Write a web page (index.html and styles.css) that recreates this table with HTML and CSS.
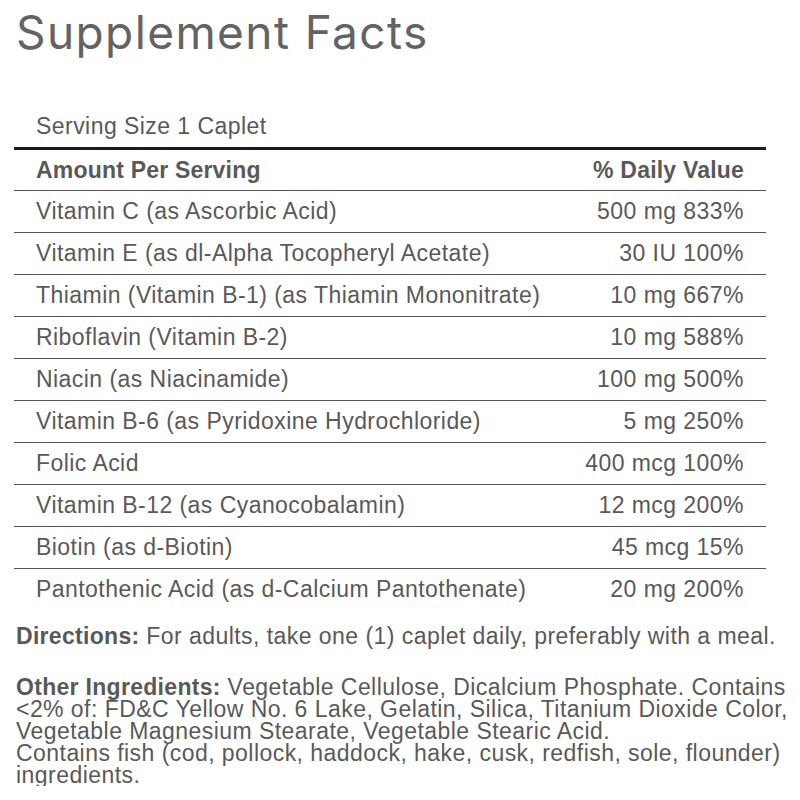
FILE: index.html
```html
<!DOCTYPE html>
<html lang="en">
<head>
<meta charset="utf-8">
<title>Supplement Facts</title>
<link rel="stylesheet" href="styles.css">
</head>
<body>
<div class="page">
  <h1 class="title">Supplement Facts</h1>
  <table class="facts">
    <tbody>
      <tr class="serving"><td colspan="2">Serving Size 1 Caplet</td></tr>
      <tr class="head"><th class="name">Amount Per Serving</th><th class="val">% Daily Value</th></tr>
      <tr><td class="name">Vitamin C (as Ascorbic Acid)</td><td class="val">500 mg 833%</td></tr>
      <tr><td class="name">Vitamin E (as dl-Alpha Tocopheryl Acetate)</td><td class="val">30 IU 100%</td></tr>
      <tr><td class="name">Thiamin (Vitamin B-1) (as Thiamin Mononitrate)</td><td class="val">10 mg 667%</td></tr>
      <tr><td class="name">Riboflavin (Vitamin B-2)</td><td class="val">10 mg 588%</td></tr>
      <tr><td class="name">Niacin (as Niacinamide)</td><td class="val">100 mg 500%</td></tr>
      <tr><td class="name">Vitamin B-6 (as Pyridoxine Hydrochloride)</td><td class="val">5 mg 250%</td></tr>
      <tr><td class="name">Folic Acid</td><td class="val">400 mcg 100%</td></tr>
      <tr><td class="name">Vitamin B-12 (as Cyanocobalamin)</td><td class="val">12 mcg 200%</td></tr>
      <tr><td class="name">Biotin (as d-Biotin)</td><td class="val">45 mcg 15%</td></tr>
      <tr class="last"><td class="name">Pantothenic Acid (as d-Calcium Pantothenate)</td><td class="val">20 mg 200%</td></tr>
    </tbody>
  </table>
  <p class="note directions"><strong>Directions:</strong> For adults, take one (1) caplet daily, preferably with a meal.</p>
  <p class="note other"><strong>Other Ingredients:</strong> Vegetable Cellulose, Dicalcium Phosphate. Contains &lt;2% of: FD&amp;C Yellow No. 6 Lake, Gelatin, Silica, Titanium Dioxide Color, Vegetable Magnesium Stearate, Vegetable Stearic Acid.<br>Contains fish (cod, pollock, haddock, hake, cusk, redfish, sole, flounder) ingredients.</p>
</div>
</body>
</html>
```

FILE: styles.css
```css
html, body {
  margin: 0;
  padding: 0;
  background: #ffffff;
}

.page {
  padding: 0 6px 0 16px;
  font-family: "Liberation Sans", Arial, sans-serif;
  color: #595959;
}

.title {
  margin: 0;
  padding-top: 4px;
  font-family: Inter, "Open Sans", sans-serif;
  font-weight: 400;
  font-size: 46px;
  line-height: 56px;
  color: #636363;
  letter-spacing: 1.4px;
}

.facts {
  margin: 46px 0 0 -2px;
  width: 752px;
  border-collapse: collapse;
  font-size: 23px;
  letter-spacing: 0.45px;
}

.facts td,
.facts th {
  padding: 0 22px;
  height: 41px;
  border-bottom: 1px solid #555;
  vertical-align: middle;
  font-weight: 400;
  white-space: nowrap;
}

.facts .name {
  text-align: left;
}

.facts .val {
  text-align: right;
}

.facts .serving td {
  height: 41px;
  border-bottom: 3px solid #1c1c1c;
}

.facts .head th {
  height: 40px;
  font-weight: 700;
  letter-spacing: 0.2px;
}

.facts .last td {
  border-bottom: none;
}

.note {
  margin: 0;
  font-size: 23px;
  line-height: 22px;
  letter-spacing: 0.45px;
}

.note strong {
  font-weight: 700;
  letter-spacing: 0.3px;
}

.directions {
  margin-top: 15px;
}

.other {
  margin-top: 29px;
}
```
